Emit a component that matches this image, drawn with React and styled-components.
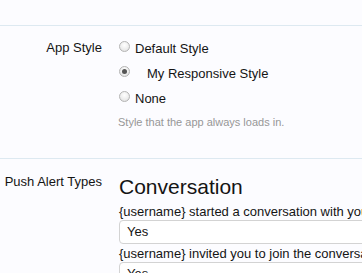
import React from "react";
import styled, { createGlobalStyle } from "styled-components";

const GlobalStyle = createGlobalStyle`
  html, body {
    margin: 0;
    padding: 0;
    background: #fcfcff;
    overflow: hidden;
  }
  body {
    font-family: "Liberation Sans", Arial, sans-serif;
    font-size: 13px;
    color: #141414;
  }
`;

const Page = styled.div`
  padding-top: 25px;
  width: 460px;
`;

const Row = styled.div`
  display: grid;
  grid-template-columns: 102px 1fr;
  column-gap: 17px;
  border-top: 1px solid #dde9f1;
  padding: ${(p) => p.$pad};
`;

const Label = styled.div`
  text-align: right;
  line-height: ${(p) => p.$lh || "16px"};
  white-space: nowrap;
`;

const Options = styled.div`
  display: flex;
  flex-direction: column;
`;

const Option = styled.label`
  display: flex;
  align-items: center;
  height: 25px;
  white-space: nowrap;
`;

const Radio = styled.span`
  width: 11px;
  height: 11px;
  box-sizing: border-box;
  border-radius: 50%;
  border: 1px solid #b4b4b4;
  background: radial-gradient(circle at 50% 35%, #ffffff 0%, #ececec 60%, #d6d6d6 100%);
  display: flex;
  align-items: center;
  justify-content: center;
  margin-top: -2px;
  flex-shrink: 0;

  &::after {
    content: "";
    width: 5px;
    height: 5px;
    border-radius: 50%;
    background: #555;
    display: ${(p) => (p.$checked ? "block" : "none")};
  }
`;

const OptionText = styled.span`
  margin-left: ${(p) => (p.$indent ? "17px" : "5px")};
  margin-top: 1px;
`;

const Hint = styled.div`
  font-size: 11px;
  line-height: 14px;
  color: #979797;
  margin-top: 5px;
  margin-left: -1px;
`;

const Heading = styled.h3`
  margin: 0 0 4px;
  font-size: 21px;
  font-weight: normal;
  line-height: 26px;
  color: #141414;
`;

const Desc = styled.div`
  line-height: 16px;
  white-space: nowrap;
`;

const Select = styled.div`
  height: 24px;
  box-sizing: border-box;
  border: 1px solid #d3d3d3;
  border-radius: 4px;
  background: #fff;
  padding-left: 7px;
  line-height: 22px;
  margin-bottom: 2px;
  width: 320px;
`;

const styles = [
  { name: "Default Style", checked: false },
  { name: "My Responsive Style", checked: true, indent: true },
  { name: "None", checked: false },
];

const alerts = [
  "{username} started a conversation with you",
  "{username} invited you to join the conversation",
];

export default function App() {
  return (
    <Page>
      <GlobalStyle />
      <Row $pad="9px 0 29px">
        <Label $lh="25px">App Style</Label>
        <div>
          <Options>
            {styles.map((s) => (
              <Option key={s.name}>
                <Radio $checked={s.checked} />
                <OptionText $indent={s.indent}>{s.name}</OptionText>
              </Option>
            ))}
          </Options>
          <Hint>Style that the app always loads in.</Hint>
        </div>
      </Row>
      <Row $pad="15px 0 0">
        <Label>Push Alert Types</Label>
        <div>
          <Heading>Conversation</Heading>
          {alerts.map((a) => (
            <div key={a}>
              <Desc>{a}</Desc>
              <Select>Yes</Select>
            </div>
          ))}
        </div>
      </Row>
    </Page>
  );
}
